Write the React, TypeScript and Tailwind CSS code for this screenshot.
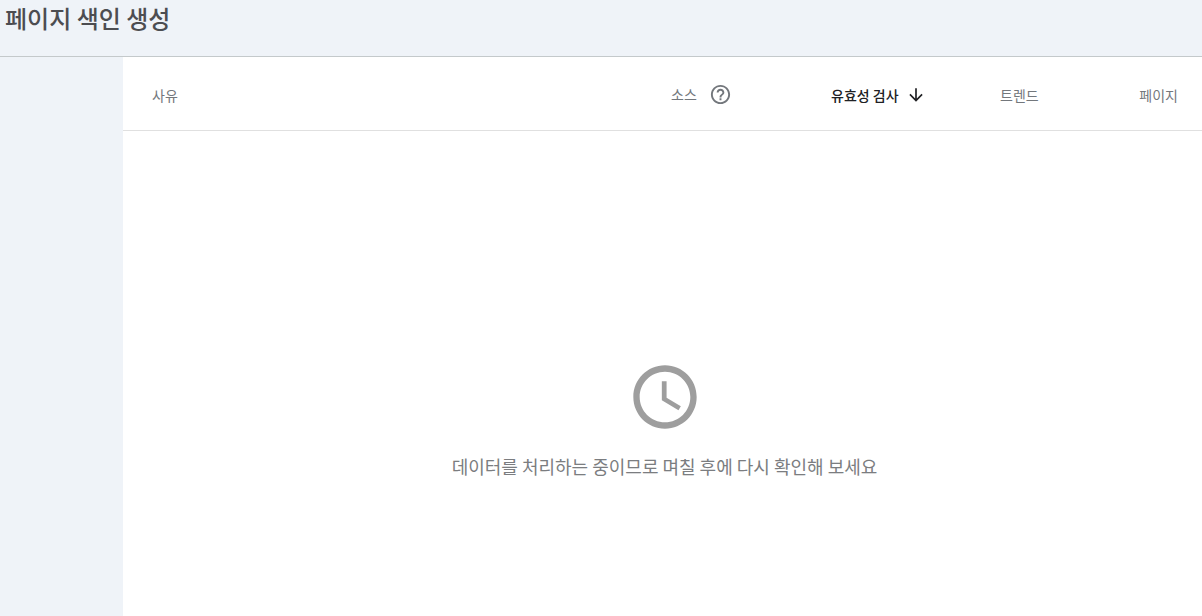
import { MdArrowDownward, MdHelpOutline, MdAccessTime } from "react-icons/md";

export default function App() {
  return (
    <div className="flex min-h-screen flex-col bg-[#eff3f8] font-['Noto_Sans_CJK_KR',sans-serif] text-[#73777c]">
      <header className="flex h-[57px] border-b border-[#c4c9cb] px-[5px] pt-0.5">
        <h1 className="text-2xl font-medium text-[#4c4d51]">페이지 색인 생성</h1>
      </header>
      <main className="ml-[123px] flex grow flex-col bg-white">
        <table className="w-full table-fixed text-sm">
          <thead>
            <tr className="h-[73px] border-b border-[#e0e0e0]">
              <th className="pt-1 pl-[29px] text-left font-normal">사유</th>
              <th className="w-[160px] pt-0.5 text-left font-normal">
                <div className="flex items-center gap-3">
                  소스
                  <button type="button" aria-label="도움말">
                    <MdHelpOutline className="size-[23px]" />
                  </button>
                </div>
              </th>
              <th className="w-[169px] pt-1 text-left font-medium text-[#202124]">
                <button type="button" className="flex items-center gap-[7px]">
                  유효성 검사
                  <MdArrowDownward className="size-5" />
                </button>
              </th>
              <th className="w-[102px] pt-1 text-left font-normal">트렌드</th>
              <th className="w-[100px] pt-1 pr-6 text-right font-normal">페이지</th>
            </tr>
          </thead>
        </table>
        <section className="flex flex-col items-center pt-[228px] pl-1">
          <MdAccessTime className="size-[76px] text-[#9e9e9e]" />
          <p className="mt-[17px] text-lg text-[#7b7d80]">데이터를 처리하는 중이므로 며칠 후에 다시 확인해 보세요</p>
        </section>
      </main>
    </div>
  );
}
